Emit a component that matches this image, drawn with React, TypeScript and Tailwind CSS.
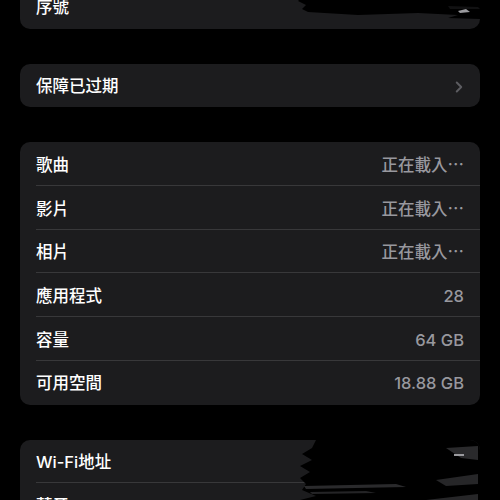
import { ChevronRight } from 'lucide-react';

type Row = { label: string; value?: string; chevron?: boolean };

const MEDIA_ROWS: Row[] = [
  { label: '歌曲', value: '正在載入⋯' },
  { label: '影片', value: '正在載入⋯' },
  { label: '相片', value: '正在載入⋯' },
  { label: '應用程式', value: '28' },
  { label: '容量', value: '64 GB' },
  { label: '可用空間', value: '18.88 GB' },
];

const FONT = { fontFamily: 'Inter, "Noto Sans CJK TC", sans-serif' };

const SettingsRow = ({ row, last }: { row: Row; last: boolean }) => (
  <div className="relative flex h-[43.7px] items-center pl-4 pr-4 pt-[2px]">
    <span className="text-[16.5px] font-medium text-white">{row.label}</span>
    <div className="ml-auto flex items-center">
      {row.value && <span className="text-[16.5px] font-medium text-[#98989e]">{row.value}</span>}
      {row.chevron && <ChevronRight size={18} strokeWidth={2.6} className="-mr-1 text-[#5c5c61]" />}
    </div>
    {!last && <div className="absolute bottom-0 left-4 right-0 h-px bg-[#38383a]" />}
  </div>
);

const Card = ({ rows, children }: { rows: Row[]; children?: React.ReactNode }) => (
  <div className="relative overflow-hidden rounded-[10px] bg-[#1c1c1e]">
    {rows.map((row, i) => (
      <SettingsRow key={row.label} row={row} last={i === rows.length - 1} />
    ))}
    {children}
  </div>
);

/* black marker scribbles hiding serial number / addresses */
const ScribbleTop = () => (
  <svg className="absolute right-0 top-0" width="182" height="44" viewBox="0 0 182 44">
    <path d="M2 0 L182 0 L182 34 L150 33 L160 30 L120 28 L60 30 L10 27 L4 24 L8 20 L0 16 L6 10 Z" fill="#000" />
    <path d="M160 26 L168 24 L172 27 L162 28 Z" fill="#9a9a9e" />
    <path d="M150 21 L180 22 L182 24 L152 24 Z" fill="#1c1c1e" opacity="0.6" />
  </svg>
);

const ScribbleBottom = () => (
  <svg className="absolute right-0 top-0" width="184" height="70" viewBox="0 0 184 70">
    <path d="M20 0 L184 0 L184 70 L0 70 L12 64 L4 60 L20 56 L6 50 L10 44 L4 38 L14 32 L4 26 L16 20 L6 14 L16 8 Z" fill="#000" />
    <path d="M8 46 L100 44 L110 47 L10 49 Z" fill="#2a2a2c" />
    <path d="M14 52 L70 51 L80 53 L16 54 Z" fill="#242426" />
    <path d="M150 8 L182 6 L182 20 L165 18 Z" fill="#2a2a2c" />
    <path d="M158 14 L168 14 L168 16 L158 16 Z" fill="#9a9a9e" />
    <path d="M140 40 L182 34 L182 44 L150 46 Z" fill="#262628" />
    <path d="M130 60 L182 54 L182 64 L140 66 Z" fill="#262628" />
  </svg>
);

export default function App() {
  return (
    <div className="h-[500px] w-[500px] overflow-hidden bg-black px-5" style={FONT}>
      <div className="-mt-[15px] flex flex-col gap-[35px]">
        <Card rows={[{ label: '序號' }]}>
          <ScribbleTop />
        </Card>
        <Card rows={[{ label: '保障已过期', chevron: true }]} />
        <Card rows={MEDIA_ROWS} />
        <Card rows={[{ label: 'Wi-Fi地址' }, { label: '藍牙' }]}>
          <ScribbleBottom />
        </Card>
      </div>
    </div>
  );
}
